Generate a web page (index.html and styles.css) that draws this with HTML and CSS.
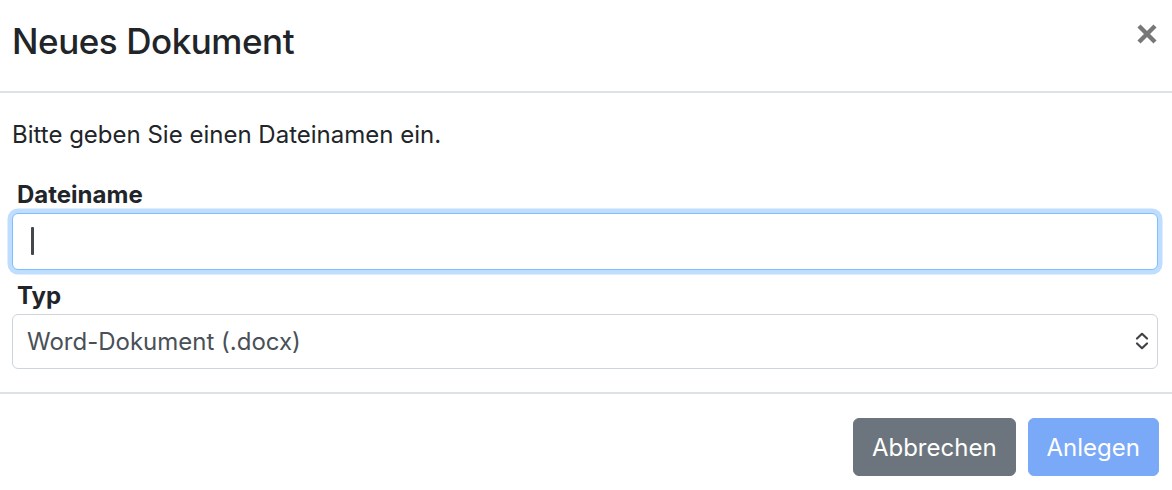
FILE: index.html
```html
<!DOCTYPE html>
<html lang="de">
<head>
<meta charset="utf-8">
<title>Neues Dokument</title>
<link rel="stylesheet" href="styles.css">
</head>
<body>
<div class="modal">
  <header class="modal-header">
    <h4 class="modal-title">Neues Dokument</h4>
    <button class="close" type="button" aria-label="Schließen">
      <svg width="20" height="20" viewBox="0 0 20 20" aria-hidden="true"><path d="M2 2L18 18M18 2L2 18" stroke="currentColor" stroke-width="4.4" fill="none"/></svg>
    </button>
  </header>
  <div class="modal-body">
    <p class="intro">Bitte geben Sie einen Dateinamen ein.</p>
    <label class="field-label" for="name">Dateiname</label>
    <div class="input-wrap">
      <input id="name" class="form-control is-focused" type="text">
      <span class="caret"></span>
    </div>
    <label class="field-label field-label-next" for="typ">Typ</label>
    <div class="select-wrap">
      <select id="typ" class="form-select">
        <option>Word-Dokument (.docx)</option>
      </select>
      <svg class="chevrons" width="14" height="18" viewBox="0 0 14 18" aria-hidden="true"><path d="M2 6.5L7 1.8L12 6.5M2 11.5L7 16.2L12 11.5" stroke="currentColor" stroke-width="2.2" fill="none" stroke-linecap="round" stroke-linejoin="round"/></svg>
    </div>
  </div>
  <footer class="modal-footer">
    <button class="btn btn-secondary" type="button">Abbrechen</button>
    <button class="btn btn-primary" type="button" disabled>Anlegen</button>
  </footer>
</div>
</body>
</html>
```
FILE: styles.css
```css
html, body {
  margin: 0;
  padding: 0;
  background: #fff;
}
body {
  font-family: Inter, "Noto Sans", "Liberation Sans", sans-serif;
  color: #212529;
  font-size: 24px;
  line-height: 36px;
}
.modal {
  display: flex;
  flex-direction: column;
}
.modal-header {
  display: flex;
  align-items: flex-start;
  justify-content: space-between;
  padding: 20px 12px 28px 12px;
  border-bottom: 2px solid #dee2e6;
}
.modal-title {
  margin: 0;
  font-size: 35px;
  line-height: 43px;
  font-weight: 500;
  color: #212529;
  letter-spacing: -0.45px;
}
.close {
  border: 0;
  background: transparent;
  padding: 0;
  margin: 4px 3px 0 0;
  color: #777;
  display: flex;
  line-height: 0;
}
.modal-body {
  padding: 24px 14px 23px 12px;
}
.intro {
  margin: 0 0 24px 0;
}
.field-label {
  display: block;
  font-weight: 700;
  padding-left: 5px;
  line-height: 36px;
}
.field-label-next {
  margin-top: 8px;
}
.input-wrap,
.select-wrap {
  position: relative;
}
.form-control,
.form-select {
  display: block;
  width: 100%;
  box-sizing: border-box;
  font-family: inherit;
  font-size: 24px;
  color: #495057;
  background: #fff;
  border-radius: 6px;
  margin: 0;
}
.form-control {
  height: 57px;
  padding: 9px 18px;
  border: 1.5px solid #ced4da;
}
.form-control.is-focused {
  border-color: #80bdff;
  box-shadow: 0 0 0 4.5px rgba(0, 123, 255, 0.25);
  outline: none;
}
.caret {
  position: absolute;
  left: 19px;
  top: 14px;
  width: 2.5px;
  height: 28px;
  background: #42474d;
  border-radius: 1px;
}
.form-select {
  height: 55px;
  padding: 0 40px 0 14px;
  border: 1.5px solid #ced4da;
  -webkit-appearance: none;
  appearance: none;
}
.chevrons {
  position: absolute;
  right: 9px;
  top: 18px;
  color: #3d4247;
}
.modal-footer {
  display: flex;
  justify-content: flex-end;
  padding: 18px 7px 18px 12px;
  border-top: 2px solid #dee2e6;
}
.btn {
  margin: 6px;
  height: 58px;
  padding: 0 18px;
  font-family: inherit;
  font-size: 24px;
  font-weight: 400;
  color: #fff;
  border: 1.5px solid transparent;
  border-radius: 6px;
}
.btn-secondary {
  background: #6c757d;
  border-color: #6c757d;
}
.btn-primary {
  background: #7aa9f8;
  border-color: #7aa9f8;
}
```
